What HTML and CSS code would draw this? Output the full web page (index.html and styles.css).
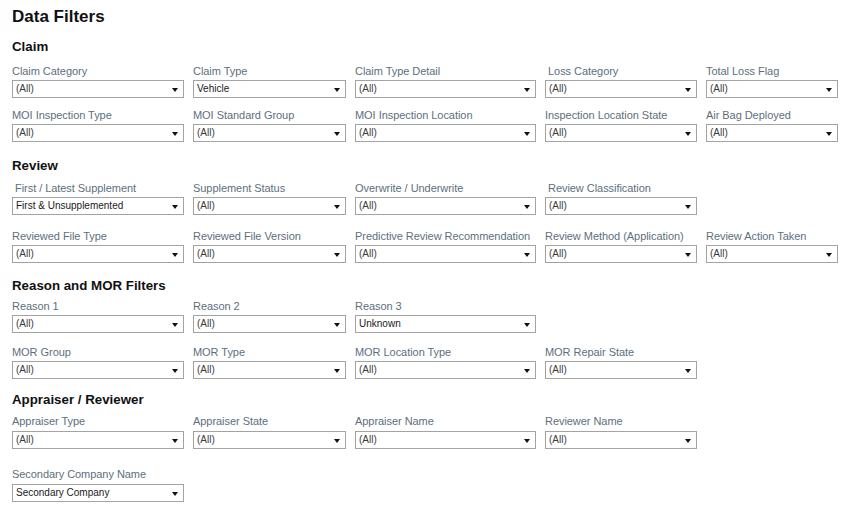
FILE: index.html
```html
<!DOCTYPE html>
<html>
<head>
<meta charset="utf-8">
<title>Data Filters</title>
<link rel="stylesheet" href="styles.css">
</head>
<body>
<div class="page">
  <h1 class="title">Data Filters</h1>

  <section class="group g-claim">
    <h2 class="group-title">Claim</h2>
    <div class="grid">
      <div class="field"><div class="label">Claim Category</div><div class="select"><span class="val muted">(All)</span><span class="arrow"></span></div></div>
      <div class="field"><div class="label">Claim Type</div><div class="select"><span class="val">Vehicle</span><span class="arrow"></span></div></div>
      <div class="field"><div class="label">Claim Type Detail</div><div class="select"><span class="val muted">(All)</span><span class="arrow"></span></div></div>
      <div class="field"><div class="label indent">Loss Category</div><div class="select"><span class="val muted">(All)</span><span class="arrow"></span></div></div>
      <div class="field"><div class="label">Total Loss Flag</div><div class="select"><span class="val muted">(All)</span><span class="arrow"></span></div></div>

      <div class="field"><div class="label">MOI Inspection Type</div><div class="select"><span class="val muted">(All)</span><span class="arrow"></span></div></div>
      <div class="field"><div class="label">MOI Standard Group</div><div class="select"><span class="val muted">(All)</span><span class="arrow"></span></div></div>
      <div class="field"><div class="label">MOI Inspection Location</div><div class="select"><span class="val muted">(All)</span><span class="arrow"></span></div></div>
      <div class="field"><div class="label">Inspection Location State</div><div class="select"><span class="val muted">(All)</span><span class="arrow"></span></div></div>
      <div class="field"><div class="label">Air Bag Deployed</div><div class="select"><span class="val muted">(All)</span><span class="arrow"></span></div></div>
    </div>
  </section>

  <section class="group g-review">
    <h2 class="group-title">Review</h2>
    <div class="grid">
      <div class="field"><div class="label indent">First / Latest Supplement</div><div class="select"><span class="val">First &amp; Unsupplemented</span><span class="arrow"></span></div></div>
      <div class="field"><div class="label">Supplement Status</div><div class="select"><span class="val muted">(All)</span><span class="arrow"></span></div></div>
      <div class="field"><div class="label">Overwrite / Underwrite</div><div class="select"><span class="val muted">(All)</span><span class="arrow"></span></div></div>
      <div class="field"><div class="label indent">Review Classification</div><div class="select"><span class="val muted">(All)</span><span class="arrow"></span></div></div>
      <div class="field empty"></div>

      <div class="field"><div class="label">Reviewed File Type</div><div class="select"><span class="val muted">(All)</span><span class="arrow"></span></div></div>
      <div class="field"><div class="label">Reviewed File Version</div><div class="select"><span class="val muted">(All)</span><span class="arrow"></span></div></div>
      <div class="field"><div class="label">Predictive Review Recommendation</div><div class="select"><span class="val muted">(All)</span><span class="arrow"></span></div></div>
      <div class="field"><div class="label">Review Method (Application)</div><div class="select"><span class="val muted">(All)</span><span class="arrow"></span></div></div>
      <div class="field"><div class="label">Review Action Taken</div><div class="select"><span class="val muted">(All)</span><span class="arrow"></span></div></div>
    </div>
  </section>

  <section class="group g-reason">
    <h2 class="group-title">Reason and MOR Filters</h2>
    <div class="grid">
      <div class="field"><div class="label">Reason 1</div><div class="select"><span class="val muted">(All)</span><span class="arrow"></span></div></div>
      <div class="field"><div class="label">Reason 2</div><div class="select"><span class="val muted">(All)</span><span class="arrow"></span></div></div>
      <div class="field"><div class="label">Reason 3</div><div class="select"><span class="val">Unknown</span><span class="arrow"></span></div></div>
      <div class="field empty"></div>
      <div class="field empty"></div>

      <div class="field"><div class="label">MOR Group</div><div class="select"><span class="val muted">(All)</span><span class="arrow"></span></div></div>
      <div class="field"><div class="label">MOR Type</div><div class="select"><span class="val muted">(All)</span><span class="arrow"></span></div></div>
      <div class="field"><div class="label">MOR Location Type</div><div class="select"><span class="val muted">(All)</span><span class="arrow"></span></div></div>
      <div class="field"><div class="label">MOR Repair State</div><div class="select"><span class="val muted">(All)</span><span class="arrow"></span></div></div>
      <div class="field empty"></div>
    </div>
  </section>

  <section class="group g-appraiser">
    <h2 class="group-title">Appraiser / Reviewer</h2>
    <div class="grid">
      <div class="field"><div class="label">Appraiser Type</div><div class="select"><span class="val muted">(All)</span><span class="arrow"></span></div></div>
      <div class="field"><div class="label">Appraiser State</div><div class="select"><span class="val muted">(All)</span><span class="arrow"></span></div></div>
      <div class="field"><div class="label">Appraiser Name</div><div class="select"><span class="val muted">(All)</span><span class="arrow"></span></div></div>
      <div class="field"><div class="label">Reviewer Name</div><div class="select"><span class="val muted">(All)</span><span class="arrow"></span></div></div>
      <div class="field empty"></div>

      <div class="field"><div class="label">Secondary Company Name</div><div class="select"><span class="val">Secondary Company</span><span class="arrow"></span></div></div>
    </div>
  </section>
</div>
</body>
</html>
```

FILE: styles.css
```css
html, body {
  margin: 0;
  padding: 0;
  background: #ffffff;
}

body {
  font-family: "Liberation Sans", Arial, sans-serif;
  color: #000000;
}

.page {
  padding: 7px 12px 0 12px;
}

.title {
  margin: 0;
  font-size: 17px;
  line-height: 20px;
  font-weight: bold;
  color: #111111;
}

.group-title {
  margin: 0;
  font-size: 13.3px;
  line-height: 18px;
  font-weight: bold;
  color: #111111;
}

.g-claim { margin-top: 11px; }
.g-review { margin-top: 15px; }
.g-reason { margin-top: 14px; }
.g-appraiser { margin-top: 12px; }

.grid {
  display: grid;
  grid-template-columns: 181px 162px 190px 161px 132px;
}

.g-claim .grid { row-gap: 10px; margin-top: 8px; }
.g-review .grid { row-gap: 14px; margin-top: 6px; }
.g-reason .grid { row-gap: 12px; margin-top: 4px; }
.g-appraiser .grid { row-gap: 18px; margin-top: 5px; }
.g-appraiser .select { margin-top: 3px; }

.field {
  display: flex;
  flex-direction: column;
  padding-right: 9px;
}

.field:nth-child(5n) {
  padding-right: 0;
}

.label {
  font-size: 11px;
  line-height: 14px;
  color: #5d6f7e;
  white-space: nowrap;
  letter-spacing: -0.05px;
}

.label.indent {
  padding-left: 3px;
}

.select {
  margin-top: 2px;
  height: 18px;
  box-sizing: border-box;
  border: 1px solid #a3a3a3;
  display: flex;
  align-items: center;
  justify-content: space-between;
  padding: 0 5px 0 3px;
  background: #ffffff;
}

.val {
  font-size: 10px;
  line-height: 16px;
  color: #1a1a1a;
  white-space: nowrap;
}

.val.muted {
  color: #3a3a3a;
}

.arrow {
  width: 0;
  height: 0;
  border-left: 3.5px solid transparent;
  border-right: 3.5px solid transparent;
  border-top: 4px solid #111111;
  margin-top: 1px;
}
```
